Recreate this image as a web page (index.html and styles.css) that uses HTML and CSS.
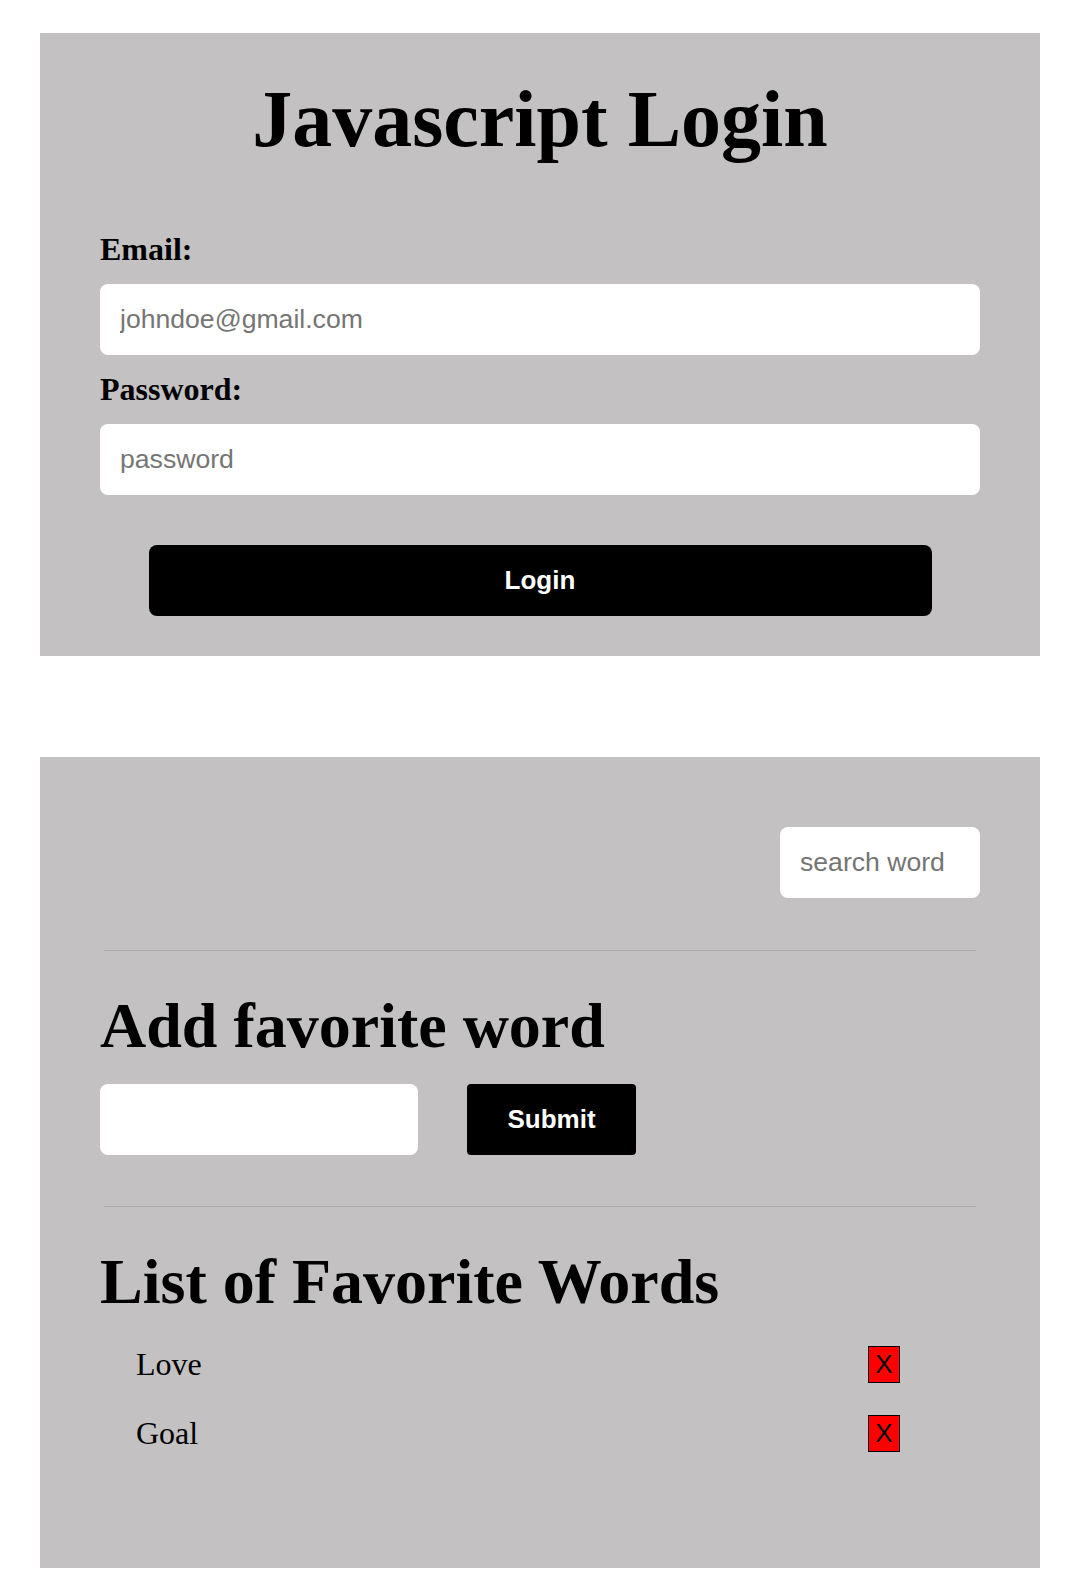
FILE: index.html
```html
<!DOCTYPE html>
<html lang="en">
<head>
<meta charset="utf-8">
<title>Javascript Login</title>
<link rel="stylesheet" href="styles.css">
</head>
<body>
  <section class="card login-card">
    <h1 class="title">Javascript Login</h1>
    <form class="login-form">
      <label class="field-label" for="email">Email:</label>
      <input class="text-input" id="email" type="text" placeholder="johndoe@gmail.com">
      <label class="field-label" for="password">Password:</label>
      <input class="text-input" id="password" type="password" placeholder="password">
      <button class="login-btn" type="button">Login</button>
    </form>
  </section>

  <section class="card words-card">
    <div class="search-row">
      <input class="text-input search-input" type="text" placeholder="search word">
    </div>
    <div class="divider"></div>
    <h2 class="section-title">Add favorite word</h2>
    <div class="add-row">
      <input class="text-input word-input" type="text">
      <button class="submit-btn" type="button">Submit</button>
    </div>
    <div class="divider"></div>
    <h2 class="section-title">List of Favorite Words</h2>
    <ul class="word-list">
      <li class="word-item"><span class="word-text">Love</span><button class="delete-btn" type="button">X</button></li>
      <li class="word-item"><span class="word-text">Goal</span><button class="delete-btn" type="button">X</button></li>
    </ul>
  </section>
</body>
</html>
```

FILE: styles.css
```css
* {
  box-sizing: border-box;
}

html, body {
  background: #ffffff;
}

body {
  margin: 0;
  padding: 33px 42px 28px 40px;
  font-family: "Liberation Serif", "Times New Roman", serif;
  color: #000;
}

.card {
  background: #c3c1c2;
  padding: 40px 60px;
}

.words-card {
  margin-top: 101px;
}

.title {
  margin: 0 0 50px;
  font-size: 80px;
  line-height: 92px;
  font-weight: bold;
  text-align: center;
}

.login-form {
  display: flex;
  flex-direction: column;
}

.field-label {
  display: block;
  margin: 16px 0 17px;
  font-size: 32px;
  line-height: 36px;
  font-weight: bold;
}

.text-input {
  display: block;
  height: 71px;
  border: none;
  border-radius: 8px;
  background: #fff;
  padding: 0 20px;
  font-family: "Liberation Sans", Arial, sans-serif;
  font-size: 26.6px;
  color: #000;
  outline: none;
}

.text-input::placeholder {
  color: #757575;
}

.login-form .text-input {
  width: 100%;
}

.login-btn {
  align-self: center;
  width: 783px;
  height: 71px;
  margin-top: 50px;
  border: none;
  border-radius: 8px;
  background: #000;
  color: #fff;
  font-family: "Liberation Sans", Arial, sans-serif;
  font-size: 26px;
  font-weight: bold;
}

.search-row {
  display: flex;
  justify-content: flex-end;
  margin-top: 30px;
}

.search-input {
  width: 200px;
}

.divider {
  height: 1px;
  margin: 52px 4px 0;
  background: #acaaab;
}

.add-row + .divider {
  margin-top: 51px;
}

.section-title {
  margin: 38px 0 0;
  font-size: 64px;
  line-height: 74px;
  font-weight: bold;
}

.add-row {
  display: flex;
  align-items: center;
  gap: 49px;
  margin-top: 21px;
}

.word-input {
  width: 318px;
}

.submit-btn {
  width: 169px;
  height: 71px;
  border: none;
  border-radius: 4px;
  background: #000;
  color: #fff;
  font-family: "Liberation Sans", Arial, sans-serif;
  font-size: 26px;
  font-weight: bold;
}

.word-list {
  list-style: none;
  margin: 27px 0 76px;
  padding: 0 80px 0 36px;
}

.word-item {
  display: flex;
  align-items: center;
  justify-content: space-between;
  height: 37px;
  margin-bottom: 32px;
}

.word-text {
  font-size: 32px;
  line-height: 37px;
}

.delete-btn {
  width: 32px;
  height: 37px;
  padding: 0;
  border: 1px solid #000;
  background: #ff0000;
  color: #000;
  font-family: "Liberation Sans", Arial, sans-serif;
  font-size: 26px;
  line-height: 35px;
}
```
